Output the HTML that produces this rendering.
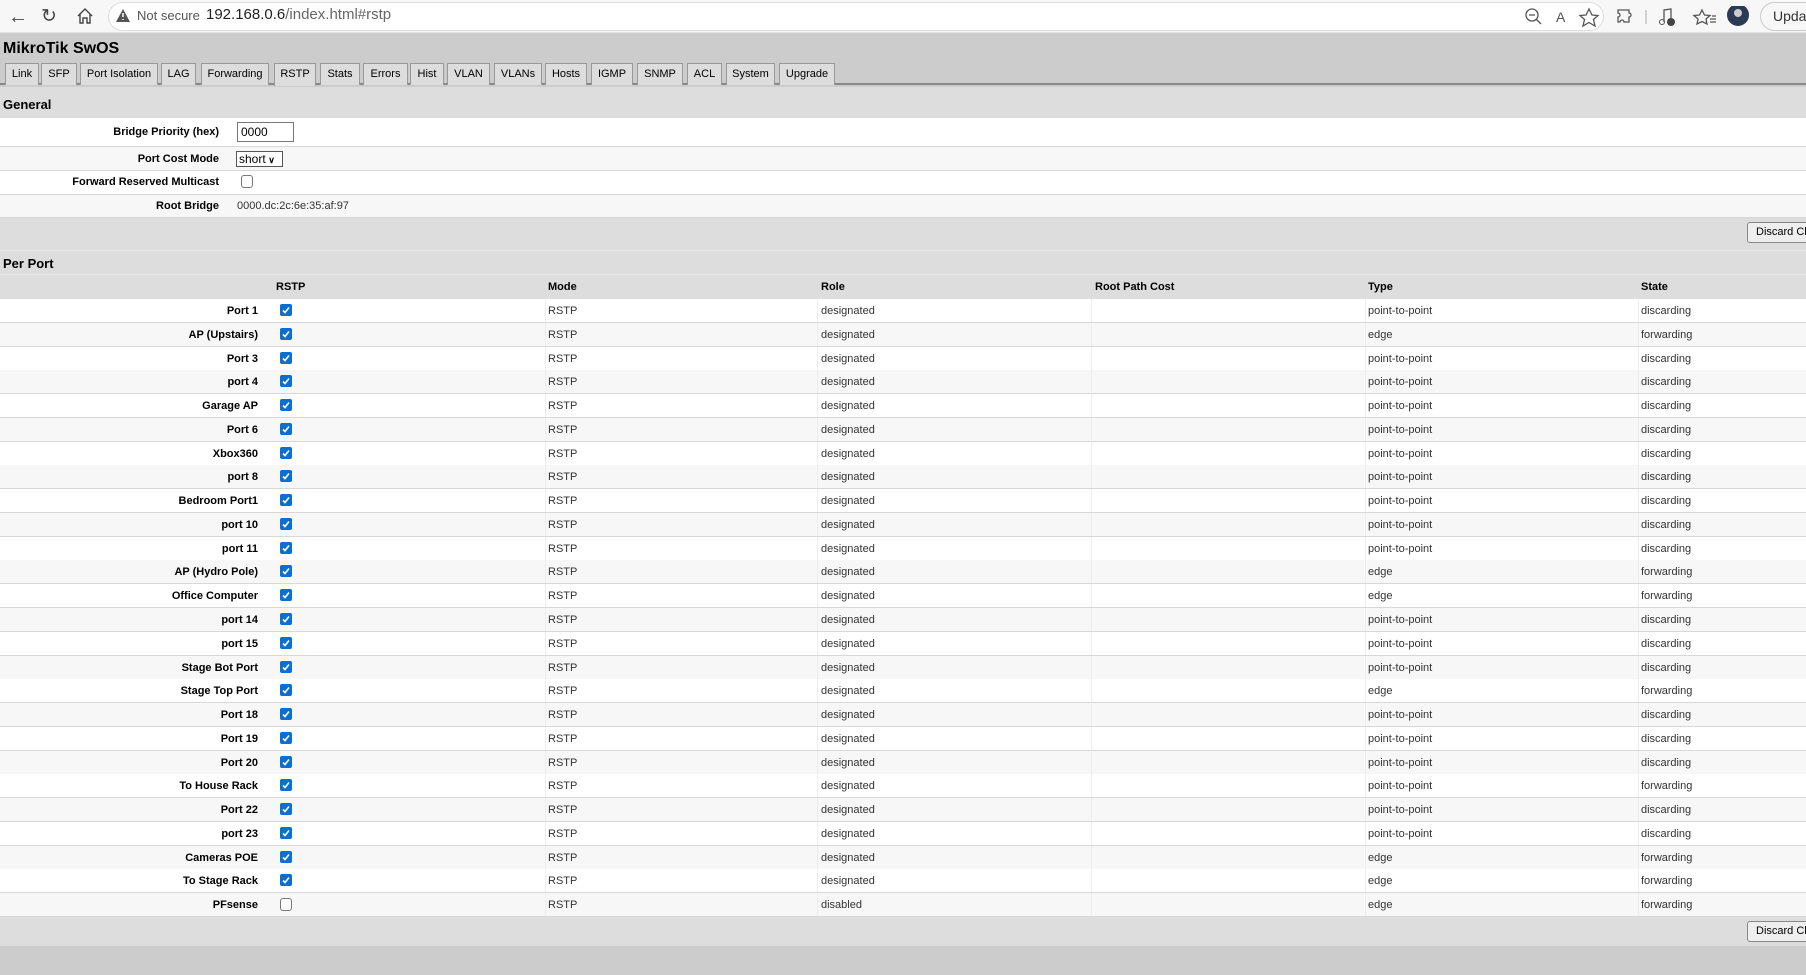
<!DOCTYPE html>
<html><head><meta charset="utf-8"><style>
*{box-sizing:border-box;margin:0;padding:0}
body{width:1806px;height:975px;overflow:hidden;background:#ccc;font-family:"Liberation Sans",Arial,sans-serif;position:relative}
.abs{position:absolute}
#bar{left:0;top:0;width:1806px;height:33px;background:#f7f7f7;border-bottom:1px solid #e0e0e0}
#url{left:108px;top:2px;width:1496px;height:29px;border:1px solid #ddd;border-radius:15px;background:#fff}
.tabs{left:4px;top:63px;height:22px}
.tab{position:absolute;top:0;height:22px;border:1px solid #999;border-bottom:none;background:#ddd;font-size:11px;text-align:center;line-height:21px;color:#000}
.row{position:absolute;left:0;width:1806px;border-bottom:1px solid #d8d8d8}
.lbl{position:absolute;font-weight:bold;font-size:11px;color:#000;text-align:right;white-space:nowrap}
.val{position:absolute;font-size:11px;color:#333}
.cb{position:absolute;width:12px;height:12px;border-radius:2px;background:#0b6fd2}
.cb svg{position:absolute;left:1px;top:1px}
.cbe{position:absolute;width:12px;height:13px;border:1px solid #777;border-radius:3px;background:#fff}
.vl{position:absolute;top:0;bottom:0;width:1px;background:#eee}
.btn{position:absolute;height:21px;border:1px solid #888;border-radius:3px;background:#eee;font-size:11px;line-height:19px;padding-left:8px;white-space:nowrap;overflow:hidden}
</style></head><body>
<div id="bar" class="abs"></div>
<div class="abs" style="left:8px;top:6px;font-size:20px;color:#444">&#8592;</div>
<div class="abs" style="left:41px;top:5px;font-size:19px;color:#444">&#8635;</div>
<svg class="abs" style="left:76px;top:7px" width="18" height="18" viewBox="0 0 18 18"><path d="M2 9 L9 2 L16 9 M4 7 V16 H7 V11 H11 V16 H14 V7" fill="none" stroke="#444" stroke-width="1.4"/></svg>
<div id="url" class="abs"></div>
<svg class="abs" style="left:116px;top:9px" width="14" height="13" viewBox="0 0 14 13"><path d="M7 0 L14 13 H0 Z" fill="#555"/><path d="M7 4 V8 M7 10 V11" stroke="#fff" stroke-width="1.5"/></svg>
<div class="abs" style="left:137px;top:8px;font-size:13px;color:#555">Not secure</div>
<div class="abs" style="left:206px;top:6px;font-size:15px;color:#222">192.168.0.6<span style="color:#666">/index.html#rstp</span></div>
<svg class="abs" style="left:1524px;top:6px" width="260" height="22" viewBox="0 0 260 22">
<circle cx="8" cy="9" r="6" fill="none" stroke="#555" stroke-width="1.3"/><path d="M5 9H11M12.5 13.5L17 18" stroke="#555" stroke-width="1.3"/>
<text x="32" y="16" font-size="14" fill="#555" font-family="Liberation Sans">A</text>
<path d="M65 3L68 9L74 9.5L69.5 13.5L71 20L65 16.5L59 20L60.5 13.5L56 9.5L62 9Z" fill="none" stroke="#555" stroke-width="1.3"/>
<path d="M99 4h6v3a2 2 0 0 1 0 4v0v5h-5a2 2 0 0 0 -4 0h-2v-5a2 2 0 0 0 0 -4v-3h5" fill="none" stroke="#555" stroke-width="1.3"/>
<path d="M122 4V18" stroke="#aaa"/>
<path d="M140 16V4L147 3V12" fill="none" stroke="#555" stroke-width="1.3"/><circle cx="138" cy="16" r="2.5" fill="none" stroke="#555"/><circle cx="147" cy="16" r="4" fill="#444"/>
<path d="M178 4L180.5 9L186 9.5L182 13L183 18L178 15.5L173 18L174 13L170 9.5L175.5 9Z M186 13H192M186 16H192M188 10H192" fill="none" stroke="#555" stroke-width="1.3"/>
<circle cx="214" cy="9" r="11" fill="#2c3a55"/><circle cx="214" cy="7" r="4" fill="#ccc"/>
</svg>
<div class="abs" style="left:1760px;top:2px;width:60px;height:29px;border:1px solid #ccc;border-radius:15px;background:#f7f7f7;font-size:14px;line-height:27px;padding-left:12px;color:#333">Update</div>

<div class="abs" style="left:0;top:33px;width:1806px;height:52px;background:#ccc;border-bottom:2px solid #888"></div>
<div class="abs" style="left:3px;top:40px;font-size:16px;font-weight:bold;color:#000">MikroTik SwOS</div>
<div class="abs tabs">
<div class="tab" style="left:1px;width:34px">Link</div>
<div class="tab" style="left:37px;width:36px">SFP</div>
<div class="tab" style="left:76px;width:78px">Port Isolation</div>
<div class="tab" style="left:157px;width:35px">LAG</div>
<div class="tab" style="left:197px;width:68px">Forwarding</div>
<div class="tab" style="left:270px;width:42px;background:#ddd;height:23px">RSTP</div>
<div class="tab" style="left:316px;width:40px">Stats</div>
<div class="tab" style="left:359px;width:45px">Errors</div>
<div class="tab" style="left:406px;width:34px">Hist</div>
<div class="tab" style="left:443px;width:43px">VLAN</div>
<div class="tab" style="left:490px;width:48px">VLANs</div>
<div class="tab" style="left:541px;width:42px">Hosts</div>
<div class="tab" style="left:587px;width:42px">IGMP</div>
<div class="tab" style="left:633px;width:46px">SNMP</div>
<div class="tab" style="left:683px;width:35px">ACL</div>
<div class="tab" style="left:722px;width:49px">System</div>
<div class="tab" style="left:775px;width:56px">Upgrade</div>
</div>

<div class="abs" style="left:0;top:87px;width:1806px;height:859px;background:#ddd"></div>
<div class="abs" style="left:3px;top:97px;font-size:13px;font-weight:bold">General</div>
<div class="row" style="top:118px;height:29px;background:#fff"></div>
<div class="row" style="top:147px;height:24px;background:#f7f7f7"></div>
<div class="row" style="top:171px;height:24px;background:#fff"></div>
<div class="row" style="top:195px;height:23px;background:#f7f7f7"></div>
<div class="lbl" style="right:1587px;top:126px">Bridge Priority (hex)</div>
<div class="abs" style="left:237px;top:122px;width:57px;height:20px;border:1px solid #777;background:#fff;font-size:12px;line-height:18px;padding-left:3px">0000</div>
<div class="lbl" style="right:1587px;top:153px">Port Cost Mode</div>
<div class="abs" style="left:236px;top:151px;width:47px;height:16px;border:1px solid #555;background:#fff;font-size:12px;line-height:14px;padding-left:2px">short<span style="font-size:9px;font-weight:bold"> &#8744;</span></div>
<div class="lbl" style="right:1587px;top:176px">Forward Reserved Multicast</div>
<div class="cbe" style="left:241px;top:175px"></div>
<div class="lbl" style="right:1587px;top:200px">Root Bridge</div>
<div class="val" style="left:237px;top:200px;font-size:11px">0000.dc:2c:6e:35:af:97</div>
<div class="btn" style="left:1747px;top:222px;width:70px">Discard Changes</div>

<div class="abs" style="left:0;top:250px;width:1806px;height:24px;background:#ddd;border-top:1px solid #e6e6e6"></div>
<div class="abs" style="left:3px;top:256px;font-size:13px;font-weight:bold">Per Port</div>
<div class="abs" style="left:0;top:274px;width:1806px;height:25px;background:#ddd;border-top:1px solid #e6e6e6;font-size:11px;font-weight:bold">
<span class="abs" style="left:276px;top:6px">RSTP</span>
<span class="abs" style="left:548px;top:6px">Mode</span>
<span class="abs" style="left:821px;top:6px">Role</span>
<span class="abs" style="left:1095px;top:6px">Root Path Cost</span>
<span class="abs" style="left:1368px;top:6px">Type</span>
<span class="abs" style="left:1641px;top:6px">State</span>
</div>
<div id="rows"></div>
<div class="btn" style="left:1747px;top:921px;width:70px">Discard Changes</div>

<script>
(function(){
var d=[["Port 1","p","d"],["AP (Upstairs)","e","f"],["Port 3","p","d"],["port 4","p","d"],["Garage AP","p","d"],["Port 6","p","d"],["Xbox360","p","d"],["port 8","p","d"],["Bedroom Port1","p","d"],["port 10","p","d"],["port 11","p","d"],["AP (Hydro Pole)","e","f"],["Office Computer","e","f"],["port 14","p","d"],["port 15","p","d"],["Stage Bot Port","p","d"],["Stage Top Port","e","f"],["Port 18","p","d"],["Port 19","p","d"],["Port 20","p","d"],["To House Rack","p","f"],["Port 22","p","d"],["port 23","p","d"],["Cameras POE","e","f"],["To Stage Rack","e","f"],["PFsense","e","f"]];
var h="";
for(var i=0;i<d.length;i++){
var ty=Math.round(299+i*23.77), last=(i==25);
h+='<div class="row" style="top:'+ty+'px;height:24px;background:'+(i%2?'#f7f7f7':'#fff')+'">'+
'<div class="vl" style="left:545px"></div><div class="vl" style="left:817px"></div><div class="vl" style="left:1091px"></div><div class="vl" style="left:1365px"></div><div class="vl" style="left:1638px"></div>'+
'<div class="lbl" style="right:1548px;top:6px">'+d[i][0]+'</div>'+
(last?'<div class="cbe" style="left:280px;top:5px"></div>':'<div class="cb" style="left:280px;top:5px"><svg width="10" height="10" viewBox="0 0 10 10"><path d="M2 5.5L4 7.5L8 2.5" fill="none" stroke="#fff" stroke-width="1.6"/></svg></div>')+
'<div class="val" style="left:548px;top:6px">RSTP</div>'+
'<div class="val" style="left:821px;top:6px">'+(last?'disabled':'designated')+'</div>'+
'<div class="val" style="left:1368px;top:6px">'+(d[i][1]=='p'?'point-to-point':'edge')+'</div>'+
'<div class="val" style="left:1641px;top:6px">'+(d[i][2]=='d'?'discarding':'forwarding')+'</div></div>';
}
document.getElementById("rows").innerHTML=h;
})();
</script>
</body></html>
